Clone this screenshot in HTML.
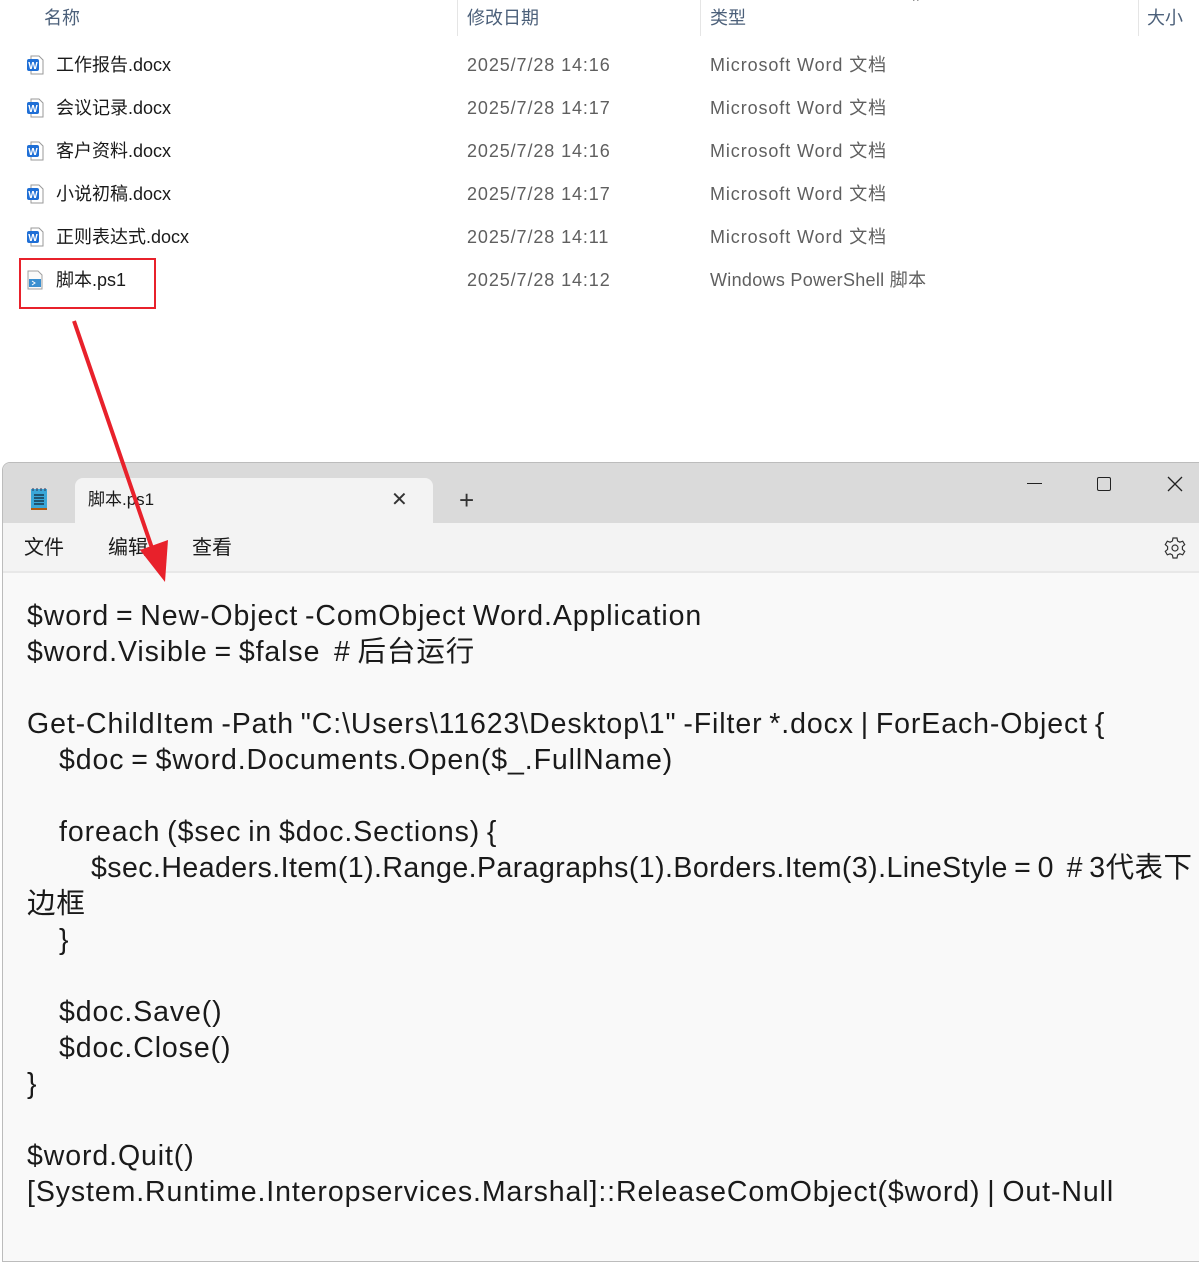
<!DOCTYPE html>
<html><head><meta charset="utf-8"><style>
*{margin:0;padding:0;box-sizing:border-box}
body{width:1199px;height:1244px;background:#fff;position:relative;overflow:hidden;font-family:"Liberation Sans","Noto Sans CJK SC",sans-serif}
.h{position:absolute;top:8px;font-size:18px;line-height:20px;color:#4c607a}
.sep{position:absolute;top:0;height:36px;width:1px;background:#e5e5e5}
.r{position:absolute;font-size:18px;line-height:20px;color:#1a1a1a;white-space:nowrap}
.g{position:absolute;font-size:18px;line-height:20px;color:#5f5f5f;white-space:nowrap;letter-spacing:0.9px}
.ic{position:absolute;left:26px;width:18px;height:20px}
.win{position:absolute;left:2px;top:462px;width:1210px;height:800px;background:#f9f9f9;border:1px solid #bcbcbc;border-radius:8px 0 0 0;overflow:hidden}
.tb{position:absolute;left:0;top:0;right:0;height:60px;background:#dadada}
.tab{position:absolute;left:72px;top:15px;width:358px;height:46px;background:#f3f3f3;border-radius:8px 8px 0 0}
.menu{position:absolute;left:0;top:60px;right:0;height:50px;background:#f3f3f3;border-bottom:2px solid #e8e8e8}
.code{position:absolute;left:24px;top:135px;font-size:28.5px;line-height:36px;color:#1a1a1a;white-space:pre;letter-spacing:0.9px;word-spacing:-2px}
.i1{display:inline-block;width:32px}.i2{display:inline-block;width:64px}
</style></head><body>
<div class="h" style="left:44px">名称</div>
<div class="h" style="left:467px">修改日期</div>
<div class="h" style="left:710px">类型</div>
<div class="h" style="left:1147px">大小</div>
<div style="position:absolute;left:913px;top:-6px;font-size:12px;color:#666">^</div>
<div class="sep" style="left:457px"></div><div class="sep" style="left:700px"></div><div class="sep" style="left:1138px"></div>

<svg class="ic" style="top:55px" viewBox="0 0 18 20"><path d="M5 1h8l4 4v14H5z" fill="#fff" stroke="#9a9a9a"/><rect x="1" y="4" width="12" height="12" rx="2" fill="#1f6fd6"/><text x="7" y="14" font-size="10" fill="#fff" text-anchor="middle" font-family="Liberation Sans" font-weight="bold">W</text></svg>
<div class="r" style="left:56px;top:55px">工作报告.docx</div>
<div class="g" style="left:467px;top:55px">2025/7/28 14:16</div><div class="g" style="left:710px;top:55px">Microsoft Word 文档</div>

<svg class="ic" style="top:98px" viewBox="0 0 18 20"><path d="M5 1h8l4 4v14H5z" fill="#fff" stroke="#9a9a9a"/><rect x="1" y="4" width="12" height="12" rx="2" fill="#1f6fd6"/><text x="7" y="14" font-size="10" fill="#fff" text-anchor="middle" font-family="Liberation Sans" font-weight="bold">W</text></svg>
<div class="r" style="left:56px;top:98px">会议记录.docx</div>
<div class="g" style="left:467px;top:98px">2025/7/28 14:17</div><div class="g" style="left:710px;top:98px">Microsoft Word 文档</div>

<svg class="ic" style="top:141px" viewBox="0 0 18 20"><path d="M5 1h8l4 4v14H5z" fill="#fff" stroke="#9a9a9a"/><rect x="1" y="4" width="12" height="12" rx="2" fill="#1f6fd6"/><text x="7" y="14" font-size="10" fill="#fff" text-anchor="middle" font-family="Liberation Sans" font-weight="bold">W</text></svg>
<div class="r" style="left:56px;top:141px">客户资料.docx</div>
<div class="g" style="left:467px;top:141px">2025/7/28 14:16</div><div class="g" style="left:710px;top:141px">Microsoft Word 文档</div>

<svg class="ic" style="top:184px" viewBox="0 0 18 20"><path d="M5 1h8l4 4v14H5z" fill="#fff" stroke="#9a9a9a"/><rect x="1" y="4" width="12" height="12" rx="2" fill="#1f6fd6"/><text x="7" y="14" font-size="10" fill="#fff" text-anchor="middle" font-family="Liberation Sans" font-weight="bold">W</text></svg>
<div class="r" style="left:56px;top:184px">小说初稿.docx</div>
<div class="g" style="left:467px;top:184px">2025/7/28 14:17</div><div class="g" style="left:710px;top:184px">Microsoft Word 文档</div>

<svg class="ic" style="top:227px" viewBox="0 0 18 20"><path d="M5 1h8l4 4v14H5z" fill="#fff" stroke="#9a9a9a"/><rect x="1" y="4" width="12" height="12" rx="2" fill="#1f6fd6"/><text x="7" y="14" font-size="10" fill="#fff" text-anchor="middle" font-family="Liberation Sans" font-weight="bold">W</text></svg>
<div class="r" style="left:56px;top:227px">正则表达式.docx</div>
<div class="g" style="left:467px;top:227px">2025/7/28 14:11</div><div class="g" style="left:710px;top:227px">Microsoft Word 文档</div>

<svg class="ic" style="top:270px" viewBox="0 0 18 20"><path d="M2 1h10l4 4v14H2z" fill="#fafafa" stroke="#a0a0a0"/><rect x="3" y="9" width="12" height="8" fill="#3a8fd0"/><path d="M6 11l3 2-3 2" stroke="#fff" fill="none"/></svg>
<div class="r" style="left:56px;top:270px">脚本.ps1</div>
<div class="g" style="left:467px;top:270px">2025/7/28 14:12</div><div class="g" style="left:710px;top:270px;letter-spacing:0.3px">Windows PowerShell 脚本</div>
<div style="position:absolute;left:19px;top:258px;width:137px;height:51px;border:2px solid #e8212b"></div>

<div class="win">
 <div class="tb"></div>
 <svg style="position:absolute;left:26px;top:24px" width="20" height="24" viewBox="0 0 20 24"><rect x="2" y="2" width="16" height="19" fill="#3aa7d8"/><path d="M5 8h10M5 11h10M5 14h10M5 17h10" stroke="#123" stroke-width="1.3"/><path d="M4 1v3M8 1v3M12 1v3M16 1v3" stroke="#335" /><rect x="2" y="21" width="16" height="2" fill="#b05a10"/></svg>
 <div class="tab"></div>
 <div style="position:absolute;left:85px;top:27px;font-size:17px;line-height:20px;color:#1a1a1a">脚本.ps1</div>
 <div style="position:absolute;left:388px;top:24px;font-size:20px;color:#333">✕</div>
 <div style="position:absolute;left:456px;top:22px;font-size:26px;color:#333;font-weight:300">+</div>
 <div style="position:absolute;left:1024px;top:20px;width:15px;height:1px;background:#222"></div>
 <div style="position:absolute;left:1094px;top:14px;width:14px;height:14px;border:1.5px solid #222;border-radius:2px"></div>
 <svg style="position:absolute;left:1164px;top:13px" width="16" height="16"><path d="M1 1L15 15M15 1L1 15" stroke="#222" stroke-width="1.3"/></svg>
 <div class="menu">
  <div style="position:absolute;left:21px;top:13px;font-size:20px;line-height:24px;color:#1a1a1a">文件</div>
  <div style="position:absolute;left:105px;top:13px;font-size:20px;line-height:24px;color:#1a1a1a">编辑</div>
  <div style="position:absolute;left:189px;top:13px;font-size:20px;line-height:24px;color:#1a1a1a">查看</div>
  <svg style="position:absolute;left:1160px;top:13px" width="24" height="24" viewBox="0 0 24 24"><path d="M10 2h4l.6 3 2.2 1.2 2.9-1 2 3.4-2.3 2v2.8l2.3 2-2 3.4-2.9-1-2.2 1.2L14 22h-4l-.6-3-2.2-1.2-2.9 1-2-3.4 2.3-2v-2.8l-2.3-2 2-3.4 2.9 1L9.4 5z" fill="none" stroke="#333" stroke-width="1.2"/><circle cx="12" cy="12" r="3" fill="none" stroke="#333" stroke-width="1.2"/></svg>
 </div>
 <div class="code">$word = New-Object -ComObject Word.Application
$word.Visible = $false  # 后台运行

Get-ChildItem -Path "C:\Users\11623\Desktop\1" -Filter *.docx | ForEach-Object {
<span class="i1"></span>$doc = $word.Documents.Open($_.FullName)

<span class="i1"></span>foreach ($sec in $doc.Sections) {
<span class="i2"></span><span style="letter-spacing:0.45px">$sec.Headers.Item(1).Range.Paragraphs(1).Borders.Item(3).LineStyle = 0  # 3代表下</span>
边框
<span class="i1"></span>}

<span class="i1"></span>$doc.Save()
<span class="i1"></span>$doc.Close()
}

$word.Quit()
[System.Runtime.Interopservices.Marshal]::ReleaseComObject($word) | Out-Null</div>
</div>

<svg style="position:absolute;left:0;top:0" width="1199" height="1244"><line x1="74" y1="321" x2="152" y2="548" stroke="#e8212b" stroke-width="4"/><path d="M140 550L165 582L168 540z" fill="#e8212b"/></svg>
</body></html>
